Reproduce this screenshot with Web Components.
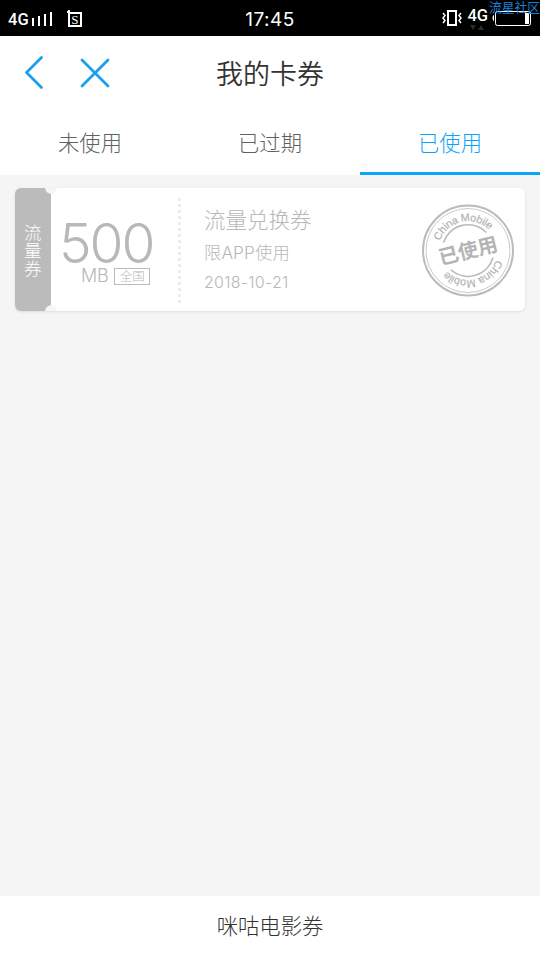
<!DOCTYPE html>
<html lang="zh-CN">
<head>
<meta charset="utf-8">
<title>我的卡券</title>
<style>
body {
    margin: 0;
    font-family: Inter, "Noto Sans CJK SC", sans-serif;
    font-weight: 300;
    background-color: #f5f5f5;
}
</style>
</head>
<body>
<card-page>
    <status-bar slot="top" time="17:45"></status-bar>
    <nav-header slot="top">我的卡券</nav-header>
    <tab-bar slot="top">
        <tab-item>未使用</tab-item>
        <tab-item>已过期</tab-item>
        <tab-item active>已使用</tab-item>
    </tab-bar>
    <coupon-card>
        <span slot="kind">流量券</span>
        <span slot="amount">500</span>
        <span slot="unit">MB</span>
        <span slot="area">全国</span>
        <span slot="title">流量兑换券</span>
        <span slot="limit">限APP使用</span>
        <span slot="date">2018-10-21</span>
        <used-stamp slot="stamp"></used-stamp>
    </coupon-card>
    <footer-link slot="bottom">咪咕电影券</footer-link>
</card-page>

<script>
class CardPage extends HTMLElement {

    constructor() {
        super();
        this.attachShadow({mode: "open"}).innerHTML = `
        <style>
        :host {
            display: flex;
            flex-direction: column;
            height: 960px;
            overflow: hidden;
        }

        main {
            flex: 1;
            padding: 13px 15px;
        }
        </style>
        <slot name="top"></slot>
        <main><slot></slot></main>
        <slot name="bottom"></slot>
        `;
    }
}

class StatusBar extends HTMLElement {

    connectedCallback() {
        this.attachShadow({mode: "open"}).innerHTML = `
        <style>
        :host {
            display: grid;
            grid-template-columns: 1fr auto 1fr;
            position: relative;
            height: 36px;
            background-color: #000;
            color: #fff;
        }

        .left {
            display: flex;
            padding: 11px 0 0 8px;
        }

        .net {
            font: 500 16.500px/18px Roboto, sans-serif;
        }

        .left svg {
            margin: -2px 0 0 1px;
        }

        .time {
            font: 400 19px/39px Inter, sans-serif;
            letter-spacing: 0.500px;
        }

        .right {
            display: flex;
            justify-content: flex-end;
            padding: 7px 9px 0 0;
        }

        .right .vibrate {
            margin: 2px 5px 0 0;
        }

        .right .battery {
            margin: 3px 0 0 4px;
        }

        .data {
            display: flex;
            flex-direction: column;
        }

        .watermark {
            position: absolute;
            top: 0;
            left: 489px;
            font: 400 12.750px/14px "Noto Sans CJK SC", sans-serif;
            color: #1b80d8;
            white-space: nowrap;
        }
        </style>
        <div class="left">
            <span class="net">4G</span>
            <svg width="54" height="20" fill="none" stroke="#fff">
                <path d="M3 9v8M9 7v10M15 5v12M21 3v14" stroke-width="2"/>
                <path d="M39 4h12v13h-12zM37 3h3M39 1v3" stroke-width="2"/>
                <text x="41.200" y="15" font-family="Liberation Serif" font-size="13" font-weight="400" fill="#fff" stroke="none">S</text>
            </svg>
        </div>
        <span class="time">${this.getAttribute("time")}</span>
        <div class="right">
            <svg class="vibrate" width="20" height="18" fill="none" stroke="#fff">
                <path d="M6 2h8v14H6z" stroke-width="2"/>
                <path d="M1 4l2 2.500-2 2.500 2 2.500-2 2.500M19 4l-2 2.500 2 2.500-2 2.500 2 2.500" stroke-width="1.500"/>
            </svg>
            <div class="data">
                <span class="net">4G</span>
                <svg width="20" height="7" fill="#2b2b2b"><path d="M3 0h6l-3 5zM11 5h6l-3-5z"/></svg>
            </div>
            <svg class="battery" width="39" height="17">
                <path d="M2 5v6c-2 0-2-6 0-6z" fill="#fff"/>
                <rect x="3.500" y="1.500" width="35" height="14" rx="2" fill="none" stroke="#fff"/>
                <rect x="33" y="3" width="4" height="11" fill="#fff"/>
            </svg>
        </div>
        <span class="watermark">流星社区</span>
        `;
    }
}

class NavHeader extends HTMLElement {

    constructor() {
        super();
        this.attachShadow({mode: "open"}).innerHTML = `
        <style>
        :host {
            display: grid;
            grid-template-columns: 1fr auto 1fr;
            height: 74px;
            background-color: #fff;
            color: #333;
            font-size: 27px;
            font-weight: 350;
            line-height: 78px;
        }

        svg {
            margin: 18px 0 0 22px;
            stroke: #1a9eee;
            stroke-width: 2.800;
            stroke-linecap: round;
            stroke-linejoin: round;
            fill: none;
        }
        </style>
        <svg width="90" height="38">
            <path d="M19.500 3.500L4.500 18.500l15 15M60 6l26 26M86 6L60 32"/>
        </svg>
        <slot></slot>
        `;
    }
}

class TabBar extends HTMLElement {

    constructor() {
        super();
        this.attachShadow({mode: "open"}).innerHTML = `
        <style>
        :host {
            display: flex;
            height: 65px;
            background-color: #fff;
        }
        </style>
        <slot></slot>
        `;
    }
}

class TabItem extends HTMLElement {

    constructor() {
        super();
        this.attachShadow({mode: "open"}).innerHTML = `
        <style>
        :host {
            flex: 1;
            box-sizing: border-box;
            height: 65px;
            text-align: center;
            font-size: 21.300px;
            line-height: 66px;
            color: #606060;
        }

        :host([active]) {
            color: #09a5f8;
            border-bottom: 3px solid #09a5f8;
        }
        </style>
        <slot></slot>
        `;
    }
}

class CouponCard extends HTMLElement {

    constructor() {
        super();
        this.attachShadow({mode: "open"}).innerHTML = `
        <style>
        :host {
            display: flex;
            height: 123px;
            color: #b8b8b8;
            border-radius: 6px;
            background:
                radial-gradient(circle at 36px 0, #f5f5f5 5.500px, transparent 6px),
                radial-gradient(circle at 36px 100%, #f5f5f5 5.500px, transparent 6px),
                linear-gradient(to right, #bbb 36px, #fff 36px);
            box-shadow: 0 1px 3px rgba(0, 0, 0, 0.1);
        }

        .kind {
            box-sizing: border-box;
            width: 36px;
            padding: 36px 9px 0;
            font-size: 17.500px;
            line-height: 18px;
            color: #fff;
            word-break: break-all;
        }

        .value {
            width: 127px;
        }

        .amount {
            height: 54px;
            padding: 23px 0 0 8px;
            font: 300 55px/65px Inter, sans-serif;
            letter-spacing: -2.100px;
        }

        .unit {
            display: flex;
            align-items: center;
            gap: 6px;
            padding-left: 30px;
            font-size: 18px;
            line-height: 22px;
            letter-spacing: -0.300px;
        }

        .area {
            box-sizing: border-box;
            width: 36px;
            height: 17px;
            border: 1px solid #bbb;
            text-align: center;
            font-size: 12.500px;
            line-height: 16px;
        }

        .line {
            width: 3px;
            height: 107px;
            margin-top: 10px;
            background: repeating-linear-gradient(#ececec 0 3px, transparent 3px 6px);
        }

        .info {
            flex: 1;
            padding: 17px 0 0 23px;
        }

        .title {
            font-size: 21.500px;
            line-height: 31px;
        }

        .limit {
            font-size: 17.300px;
            line-height: 33px;
            letter-spacing: 0.100px;
        }

        .date {
            font-size: 16px;
            line-height: 26px;
            letter-spacing: 0.250px;
        }

        .stamp {
            padding: 16px 10px 0 0;
        }
        </style>
        <div class="kind"><slot name="kind"></slot></div>
        <div class="value">
            <div class="amount"><slot name="amount"></slot></div>
            <div class="unit">
                <slot name="unit"></slot>
                <div class="area"><slot name="area"></slot></div>
            </div>
        </div>
        <div class="line"></div>
        <div class="info">
            <div class="title"><slot name="title"></slot></div>
            <div class="limit"><slot name="limit"></slot></div>
            <div class="date"><slot name="date"></slot></div>
        </div>
        <div class="stamp"><slot name="stamp"></slot></div>
        `;
    }
}

class UsedStamp extends HTMLElement {

    constructor() {
        super();
        this.attachShadow({mode: "open"}).innerHTML = `
        <style>
        :host {
            display: block;
            width: 94px;
            height: 94px;
        }

        svg {
            display: block;
            fill: none;
            stroke: #bbb;
        }

        text {
            fill: #b4b4b4;
            stroke: none;
        }

        .ring {
            font: 400 10.800px "Liberation Sans", sans-serif;
            stroke: #b4b4b4;
            stroke-width: 0.200;
        }

        .label {
            font: 700 20px "Noto Sans CJK SC", sans-serif;
        }
        </style>
        <svg width="94" height="94" viewBox="-47 -46.500 94 94">
            <defs>
                <path id="top" d="M-27.900 -9.500A29.500 29.500 0 0 1 22 -19.600"/>
                <path id="bottom" d="M28 9.200A29.500 29.500 0 0 1 -21.600 20.100"/>
            </defs>
            <circle r="45" stroke-width="2"/>
            <circle r="42" stroke-width="0.800"/>
            <path d="M-24.500 -8A25.800 25.800 0 0 1 18.500 -18M25 7A25.800 25.800 0 0 1 -17 19.400" stroke-width="1.600"/>
            <text class="ring"><textPath href="#top" textLength="60">China Mobile</textPath></text>
            <text class="ring"><textPath href="#bottom" textLength="60">China Mobile</textPath></text>
            <text class="label" text-anchor="middle" transform="rotate(-14)" y="7.500">已使用</text>
        </svg>
        `;
    }
}

class FooterLink extends HTMLElement {

    constructor() {
        super();
        this.attachShadow({mode: "open"}).innerHTML = `
        <style>
        :host {
            display: block;
            height: 64px;
            background-color: #fff;
            text-align: center;
            font-size: 21.300px;
            line-height: 61px;
            color: #333;
        }
        </style>
        <slot></slot>
        `;
    }
}

customElements.define("card-page", CardPage);
customElements.define("status-bar", StatusBar);
customElements.define("nav-header", NavHeader);
customElements.define("tab-bar", TabBar);
customElements.define("tab-item", TabItem);
customElements.define("coupon-card", CouponCard);
customElements.define("used-stamp", UsedStamp);
customElements.define("footer-link", FooterLink);
</script>
</body>
</html>
